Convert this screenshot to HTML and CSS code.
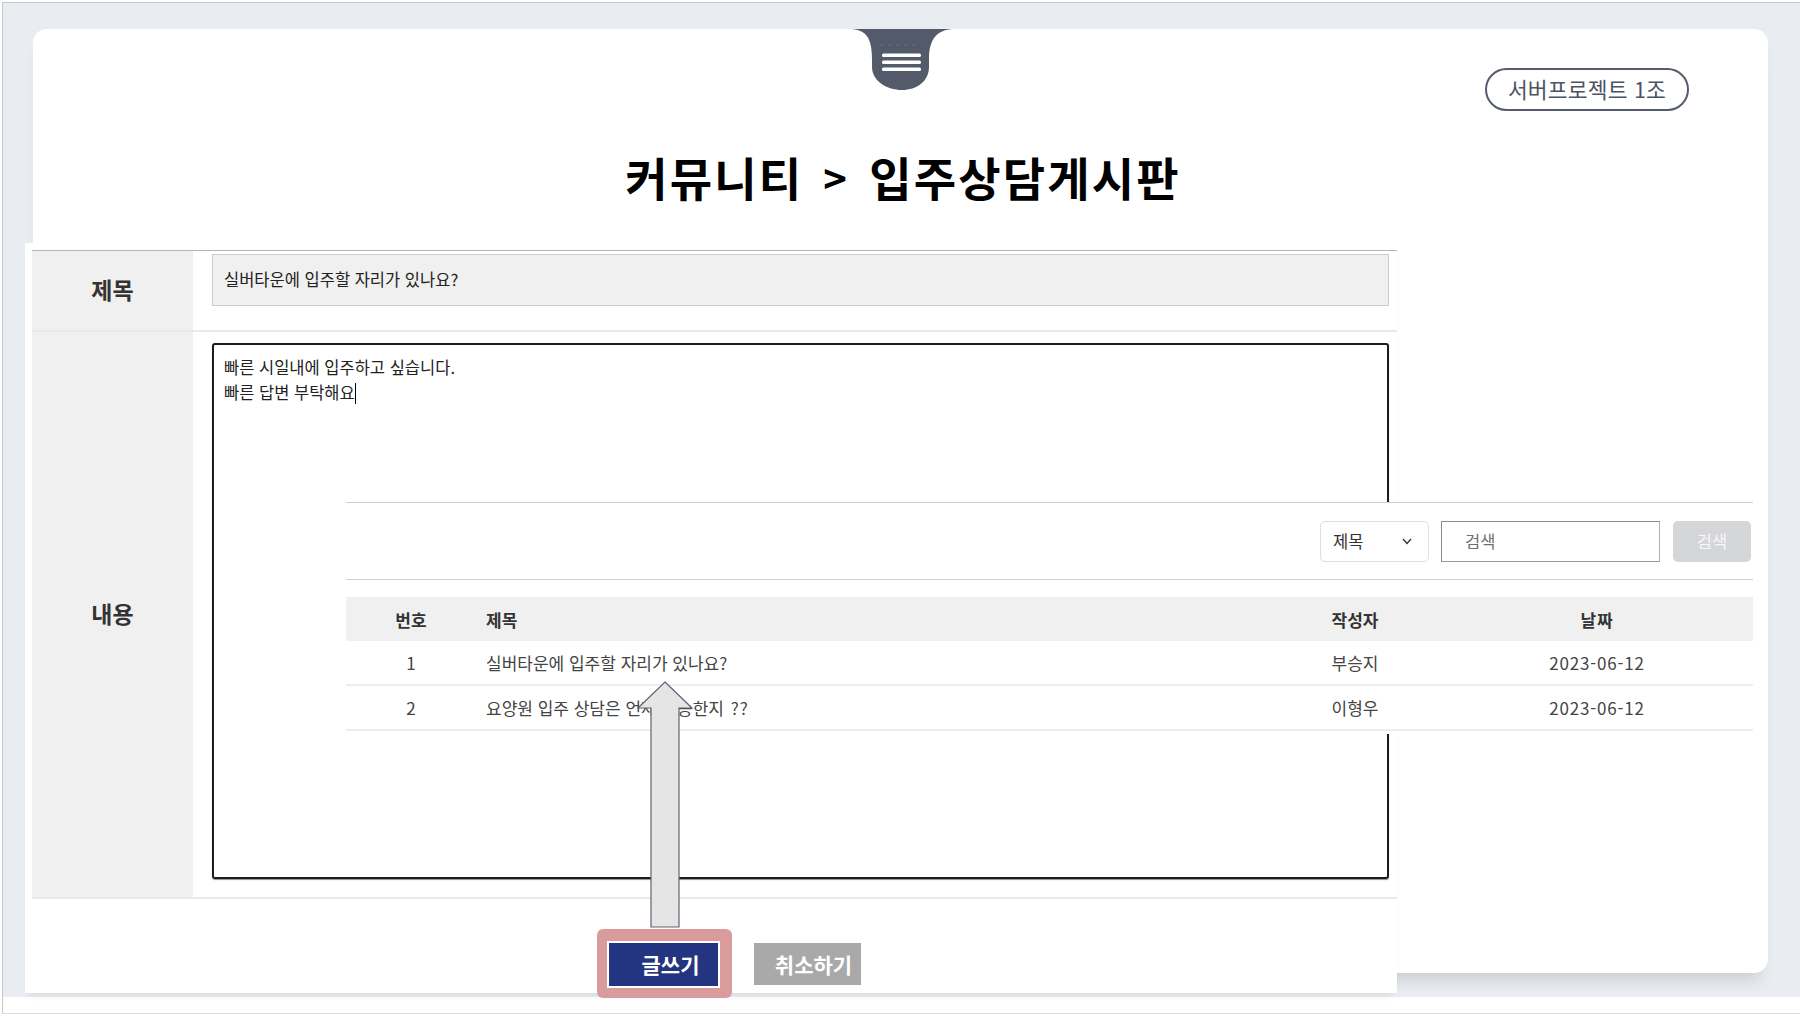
FILE: index.html
```html
<!DOCTYPE html>
<html lang="ko">
<head>
<meta charset="utf-8">
<title>커뮤니티 &gt; 입주상담게시판</title>
<link rel="stylesheet" href="styles.css">
</head>
<body>
<div class="page">
  <div class="frame">
    <div class="card">
      <div class="card-head">
        <div></div>
        <div class="menu-tab">
          <svg width="106" height="62" viewBox="0 0 106 62">
            <path d="M0,0 H106 C88,0 80,10 80,30 V38 C80,52 68,61 53,61 C38,61 23,52 23,38 V30 C23,10 18,0 0,0 Z" fill="#535b6b"/>
            <line x1="32" y1="16" x2="72" y2="16" stroke="#8d93a0" stroke-width="1" stroke-dasharray="1 7"/>
            <rect x="33" y="24.5" width="39" height="3.5" rx="1.5" fill="#fff"/>
            <rect x="33" y="31.5" width="39" height="3.5" rx="1.5" fill="#fff"/>
            <rect x="33" y="38.5" width="39" height="3.5" rx="1.5" fill="#fff"/>
          </svg>
        </div>
        <div class="pill">서버프로젝트 1조</div>
      </div>
      <h1 class="title">커뮤니티<span class="sep">&gt;</span>입주상담게시판</h1>
    </div>
  </div>

  <div class="form-panel">
    <div class="form-table">
      <div class="form-row row-title">
        <div class="label">제목</div>
        <div class="cell cell-title">
          <div class="title-input">실버타운에 입주할 자리가 있나요?</div>
        </div>
      </div>
      <div class="form-row row-content">
        <div class="label">내용</div>
        <div class="cell cell-content">
          <div class="content-area">
            <div>빠른 시일내에 입주하고 싶습니다.</div>
            <div>빠른 답변 부탁해요<span class="caret"></span></div>
          </div>
        </div>
      </div>
    </div>
    <div class="btn-row">
      <div class="highlight">
        <button class="btn btn-write">글쓰기</button>
      </div>
      <button class="btn btn-cancel">취소하기</button>
    </div>
  </div>

  <div class="list-panel">
    <div class="search-bar">
      <div class="select">
        <span>제목</span>
        <svg width="10" height="7" viewBox="0 0 10 7"><polyline points="1,1 5,5.5 9,1" fill="none" stroke="#333" stroke-width="1.4"/></svg>
      </div>
      <div class="search-input">검색</div>
      <button class="search-btn">검색</button>
    </div>
    <div class="list">
      <div class="list-row list-head">
        <div class="c-num">번호</div>
        <div class="c-title">제목</div>
        <div class="c-writer">작성자</div>
        <div class="c-date">날짜</div>
      </div>
      <div class="list-row">
        <div class="c-num">1</div>
        <div class="c-title">실버타운에 입주할 자리가 있나요?</div>
        <div class="c-writer">부승지</div>
        <div class="c-date">2023-06-12</div>
      </div>
      <div class="list-row">
        <div class="c-num">2</div>
        <div class="c-title">요양원 입주 상담은 언제 가능한지 <span class="qq">??</span></div>
        <div class="c-writer">이형우</div>
        <div class="c-date">2023-06-12</div>
      </div>
    </div>
  </div>

  <svg class="arrow" width="58" height="250" viewBox="0 0 58 250">
    <polygon points="29,2 56,28 43,28 43,247 15,247 15,28 2,28" fill="#e5e5e5" stroke="#5c6475" stroke-width="1.2" stroke-linejoin="miter"/>
  </svg>
</div>
</body>
</html>
```

FILE: styles.css
```css
* { box-sizing: border-box; }

html, body {
  margin: 0;
  padding: 0;
  background: #ffffff;
  font-family: "Noto Sans CJK KR", "Noto Sans", sans-serif;
  color: #222;
}

.page {
  position: relative;
  margin: 2px 0 0 2px;
  height: 1012px;
  border-top: 1px solid #c9c9c9;
  border-left: 1px solid #c9c9c9;
  border-bottom: 1px solid #dcdcdc;
}

.frame {
  height: 994px;
  background: #e9ecf0;
  padding-top: 26px;
  padding-left: 30px;
}

.card {
  width: 1735px;
  height: 944px;
  background: #ffffff;
  border-radius: 14px;
  box-shadow: 0 14px 16px -8px rgba(0, 0, 0, 0.14);
}

.card-head {
  display: grid;
  grid-template-columns: 1fr 106px 1fr;
  padding-left: 3px;
}

.menu-tab {
  height: 62px;
}
.menu-tab svg { display: block; }

.pill {
  justify-self: end;
  margin-top: 39px;
  margin-right: 79px;
  width: 204px;
  height: 43px;
  border: 2px solid #555c6b;
  border-radius: 22px;
  display: flex;
  align-items: center;
  justify-content: center;
  padding-bottom: 2px;
  font-size: 21.5px;
  color: #4c5363;
  letter-spacing: 0.2px;
}

.title {
  margin: 38px 0 0 0;
  padding-left: 5px;
  text-align: center;
  font-size: 46px;
  line-height: 1.2;
  font-weight: 700;
  color: #000;
  letter-spacing: 2.2px;
}

.title .sep {
  display: inline-block;
  margin: 0 20px 0 20px;
  font-size: 40px;
  vertical-align: 2px;
}

/* form overlay */
.form-panel {
  position: absolute;
  left: 22px;
  top: 240px;
  width: 1372px;
  height: 750px;
  background: #ffffff;
  padding: 7px 0 0 7px;
  box-shadow: 0 6px 8px -4px rgba(0, 0, 0, 0.08);
}

.form-table {
  width: 1365px;
  border-top: 1px solid #b4b4b4;
}

.form-row {
  display: flex;
  border-bottom: 2px solid #e9e9e9;
}

.row-title { height: 81px; }
.row-content { height: 567px; }

.label {
  width: 161px;
  flex: none;
  background: #f0f0f0;
  display: flex;
  align-items: center;
  justify-content: center;
  padding-bottom: 4px;
  font-size: 23px;
  font-weight: 700;
  color: #333;
}

.cell {
  flex: 1;
  padding-left: 19px;
  padding-right: 8px;
}
.cell-title { padding-top: 3px; }
.cell-content { padding-top: 11px; }

.title-input {
  height: 52px;
  background: #f0f0f0;
  border: 1px solid #cccccc;
  display: flex;
  align-items: center;
  padding-left: 11px;
  padding-bottom: 2px;
  font-size: 16.5px;
  color: #222;
}

.content-area {
  height: 536px;
  border: 2px solid #1c1c1c;
  border-radius: 3px;
  box-shadow: 0 1px 1px rgba(0, 0, 0, 0.45);
  padding: 10px 0 0 10px;
  font-size: 16.5px;
  line-height: 25px;
  color: #222;
}

.caret {
  display: inline-block;
  width: 1px;
  height: 21px;
  background: #000;
  vertical-align: -5px;
}

.btn-row {
  display: flex;
  align-items: flex-start;
  gap: 22px;
  margin-top: 30px;
  padding-left: 565px;
}

.highlight {
  background: #d99b9b;
  border-radius: 6px;
  padding: 12px 12px 10px 10px;
}

.btn {
  font-family: "Noto Sans CJK KR", sans-serif;
  font-weight: 700;
  font-size: 21px;
  color: #ffffff;
  border: none;
  cursor: pointer;
  display: flex;
  align-items: center;
  justify-content: center;
  padding-bottom: 2px;
}

.btn-write {
  width: 113px;
  height: 47px;
  background: #233580;
  border: 2px solid #ffffff;
  padding-left: 20px;
}

.btn-cancel {
  margin-top: 14px;
  width: 107px;
  height: 42px;
  background: #a9a9a9;
  padding-left: 18px;
}

/* list overlay */
.list-panel {
  position: absolute;
  left: 343px;
  top: 499px;
  width: 1407px;
  height: 232px;
  background: #ffffff;
  border-top: 1px solid #cfcfcf;
}

.search-bar {
  height: 77px;
  border-bottom: 1px solid #cfcfcf;
  display: flex;
  justify-content: flex-end;
  align-items: center;
  padding-right: 2px;
}

.select {
  width: 109px;
  height: 41px;
  border: 1px solid #dedede;
  border-radius: 5px;
  display: flex;
  align-items: center;
  justify-content: space-between;
  padding: 0 16px 0 12px;
  font-size: 16.5px;
  color: #333;
}
.select svg { display: block; }

.search-input {
  margin-left: 12px;
  width: 219px;
  height: 41px;
  border: 1px solid #8a8a8a;
  border-right-color: #b0b0b0;
  border-bottom-color: #9a9a9a;
  display: flex;
  align-items: center;
  padding-left: 23px;
  font-size: 16.5px;
  color: #6f6f6f;
}

.search-btn {
  margin-left: 13px;
  width: 78px;
  height: 41px;
  border: none;
  border-radius: 5px;
  background: #d5d6d8;
  font-family: "Noto Sans CJK KR", sans-serif;
  font-size: 16.5px;
  color: #f7f7f7;
}

.list {
  margin-top: 17px;
}

.list-row {
  display: grid;
  grid-template-columns: 130px 1fr 172px 312px;
  align-items: center;
  height: 45px;
  border-bottom: 2px solid #ededed;
  font-size: 17px;
  color: #444;
}

.list-head {
  height: 44px;
  background: #f0f0f0;
  border-bottom: none;
  font-weight: 700;
  color: #333;
}

.c-num, .c-writer, .c-date { text-align: center; }
.c-title { padding-left: 10px; }
.c-date { letter-spacing: 0.8px; }
.qq { letter-spacing: 1px; margin-left: 2px; }

.arrow {
  position: absolute;
  left: 633px;
  top: 677px;
  display: block;
}
```
